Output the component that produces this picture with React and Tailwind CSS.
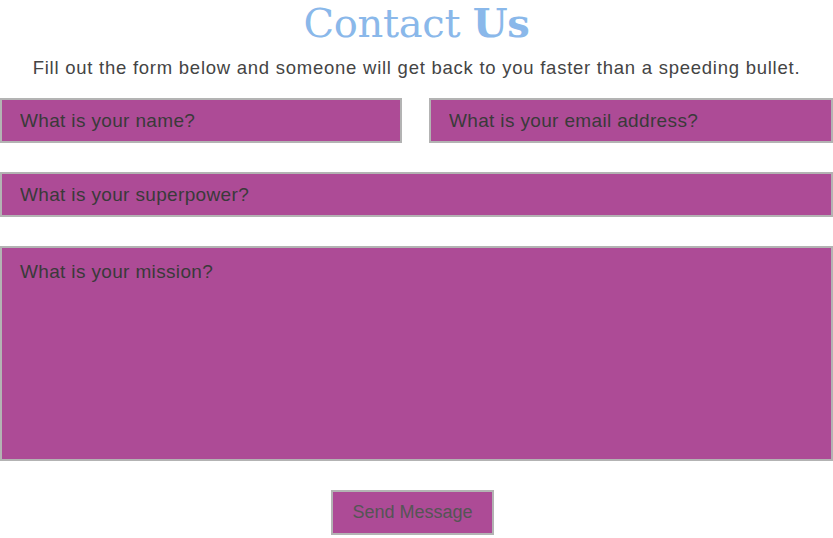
import React from 'react';

const field =
  'w-full h-[45px] bg-[#ad4b96] border-2 border-[#b3b3b3] px-[18px] text-[19px] tracking-[0.35px] text-[#3a3a3a] placeholder:text-[#3a3a3a] outline-none';

export default function App() {
  return (
    <div className="w-[833px] h-[538px] bg-white overflow-hidden" style={{ fontFamily: '"Liberation Sans", Arial, sans-serif' }}>
      <h1
        className="text-center text-[40px] leading-[46px] tracking-[-0.3px] text-[#8ab8ea] font-normal"
        style={{ fontFamily: '"DejaVu Serif", "Liberation Serif", serif' }}
      >
        Contact <span className="font-bold">Us</span>
      </h1>
      <p className="text-center text-[18.5px] tracking-[0.75px] text-[#444] mt-[10px] leading-[24px]">
        Fill out the form below and someone will get back to you faster than a speeding bullet.
      </p>

      <form className="mt-[18px] flex flex-col">
        <div className="grid grid-cols-[402px_1fr] gap-[27px]">
          <input className={field + ' border-[#8ab8ea]'} placeholder="What is your name?" />
          <input className={field} placeholder="What is your email address?" />
        </div>
        <input className={field + ' mt-[29px]'} placeholder="What is your superpower?" />
        <textarea
          className={field + ' mt-[29px] h-[215px] pt-[10px] resize-none'}
          placeholder="What is your mission?"
        />
        <div className="flex justify-center mt-[29px] pr-[8px]">
          <button
            type="button"
            className="w-[163px] h-[45px] bg-[#ad4b96] border-2 border-[#b3b3b3] text-[18px] text-[#555]"
          >
            Send Message
          </button>
        </div>
      </form>
    </div>
  );
}
